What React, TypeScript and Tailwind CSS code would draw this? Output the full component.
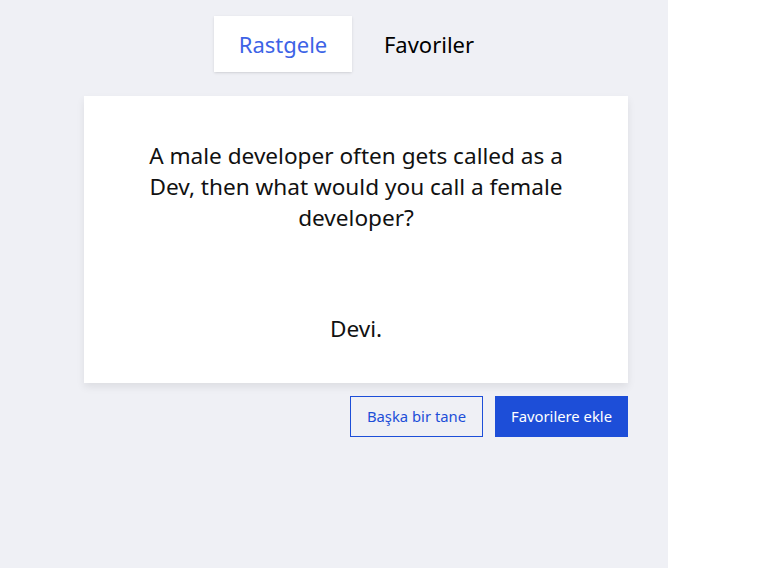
import React from 'react';

const font = { fontFamily: '"Noto Sans", "Open Sans", sans-serif' };

export default function App() {
    return (
        <div className="flex min-h-[568px] w-full bg-white" style={font}>
            <div className="w-[668px] bg-[#eff0f5] pl-[84px] pt-4">
                <div className="w-[544px]">
                    <div className="flex justify-center gap-2">
                        <button className="h-14 w-[138px] bg-white text-[22px] text-[#3d63e6] shadow-sm">Rastgele</button>
                        <button className="h-14 w-[138px] text-[22px] text-black">Favoriler</button>
                    </div>
                    <div className="mt-6 flex h-[287px] flex-col items-center bg-white px-12 pt-[44px] text-center text-[22.6px] leading-[31px] text-[#111] shadow-[0_4px_8px_rgba(0,0,0,0.08)]">
                        <p className="w-[430px]">A male developer often gets called as a Dev, then what would you call a female developer?</p>
                        <p className="mt-[80px]">Devi.</p>
                    </div>
                    <div className="mt-[13px] flex justify-end gap-3">
                        <button className="h-[41px] w-[133px] border border-[#1d4ed8] text-[14.8px] text-[#1d4ed8]">Başka bir tane</button>
                        <button className="h-[41px] w-[133px] bg-[#1d4ed8] text-[14.8px] text-white">Favorilere ekle</button>
                    </div>
                </div>
            </div>
        </div>
    );
}
